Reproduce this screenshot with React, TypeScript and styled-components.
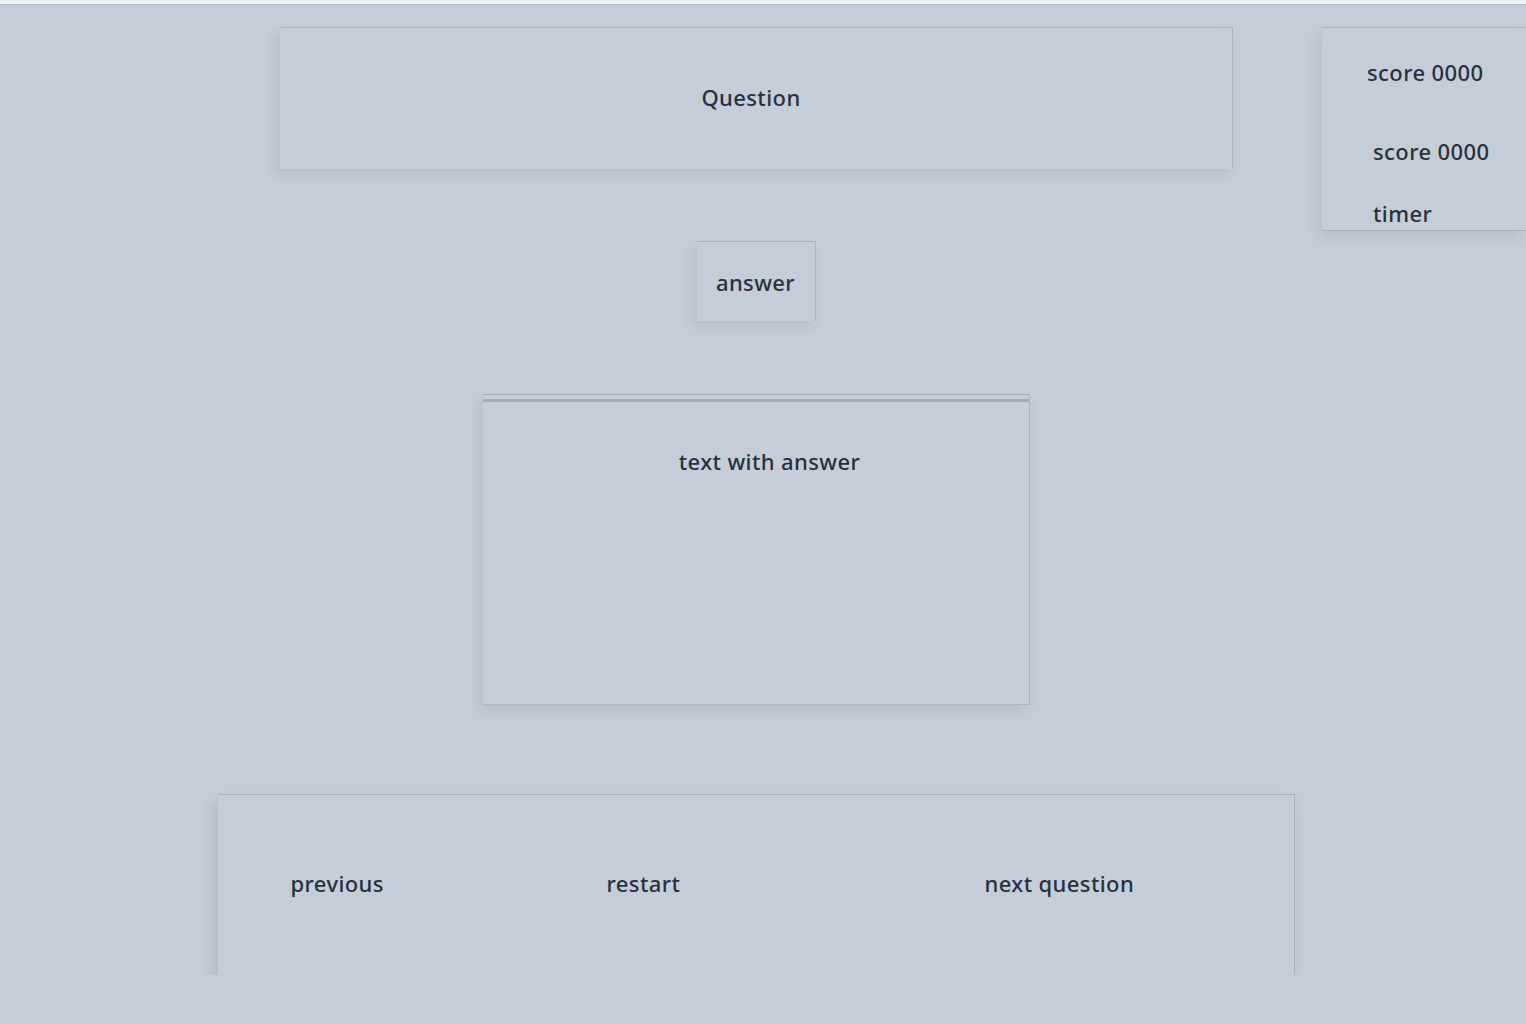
import styled, { createGlobalStyle } from "styled-components";

const GlobalStyle = createGlobalStyle`
  html, body {
    margin: 0;
    padding: 0;
    background: #c5ced8;
  }
  body {
    font-family: "Noto Sans", "Open Sans", sans-serif;
    font-weight: 500;
    letter-spacing: 0.4px;
    color: #28313d;
    overflow: hidden;
  }
`;

const TopStrip = styled.div`
  height: 4px;
  background: #eef2f6;
  border-bottom: 1px solid #b4bdc7;
`;

const Page = styled.div`
  width: 1512px;
  display: flex;
  flex-direction: column;
  align-items: center;
  padding-top: 22px;
`;

const TopRow = styled.div`
  align-self: stretch;
  display: flex;
  align-items: flex-start;
  padding-left: 280px;
`;

const Panel = styled.div`
  background: #c5ced8;
  border-top: 1px solid #a9b2bd;
  border-right: 1px solid #a9b2bd;
  box-shadow: -4px 6px 12px rgba(60, 75, 95, 0.12);
  box-sizing: border-box;
  flex-shrink: 0;
`;

const QuestionBox = styled(Panel)`
  width: 953px;
  height: 142px;
  display: flex;
  align-items: center;
  justify-content: center;
  font-size: 22px;
  padding: 0 10px 4px 0;
`;

const ScorePanel = styled(Panel)`
  margin-left: 89px;
  width: 204px;
  height: 204px;
  border-right: none;
  border-bottom: 1px solid #a9b2bd;
  display: flex;
  flex-direction: column;
  font-size: 22px;
`;

const ScoreLine = styled.div<{ $indent: number; $top: number }>`
  padding-left: ${(p) => p.$indent}px;
  margin-top: ${(p) => p.$top}px;
  line-height: 28px;
  white-space: nowrap;
`;

const AnswerButton = styled(Panel)`
  margin-top: 10px;
  width: 119px;
  height: 80px;
  display: flex;
  align-items: center;
  justify-content: center;
  font-size: 22px;
`;

const AnswerCard = styled(Panel)`
  margin-top: 73px;
  width: 547px;
  height: 311px;
  box-shadow: inset 0 4px 0 #c5ced8, inset 0 7px 0 #a3adb8,
    -4px 6px 12px rgba(60, 75, 95, 0.12);
  border-bottom: 1px solid #aeb7c1;
  padding: 52px 0 0 28px;
  text-align: center;
  font-size: 22px;
  line-height: 28px;
`;

const NavBar = styled(Panel)`
  margin-top: 89px;
  width: 1077px;
  height: 181px;
  display: grid;
  grid-template-columns: 316px 378px 1fr;
  align-items: center;
  padding-left: 73px;
  font-size: 22px;
  box-shadow: -4px 8px 14px rgba(60, 75, 95, 0.18);
`;

const NavButton = styled.div`
  line-height: 28px;
  padding-bottom: 4px;
`;

export default function App() {
  return (
    <>
      <GlobalStyle />
      <TopStrip />
      <Page>
        <TopRow>
          <QuestionBox>Question</QuestionBox>
          <ScorePanel>
            <ScoreLine $indent={45} $top={30}>score 0000</ScoreLine>
            <ScoreLine $indent={51} $top={51}>score 0000</ScoreLine>
            <ScoreLine $indent={51} $top={34}>timer</ScoreLine>
          </ScorePanel>
        </TopRow>
        <AnswerButton>answer</AnswerButton>
        <AnswerCard>text with answer</AnswerCard>
        <NavBar>
          <NavButton>previous</NavButton>
          <NavButton>restart</NavButton>
          <NavButton>next question</NavButton>
        </NavBar>
      </Page>
    </>
  );
}
